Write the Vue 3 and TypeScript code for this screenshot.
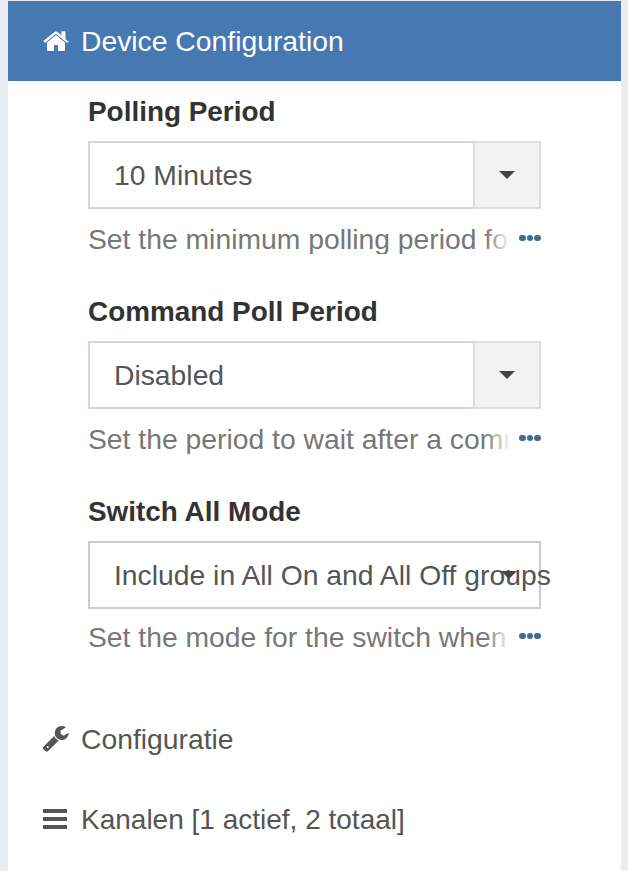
<script setup lang="ts">
interface Field {
  label: string
  value: string
  help: string
  addon: boolean
}

const fields: Field[] = [
  { label: 'Polling Period', value: '10 Minutes', help: 'Set the minimum polling period for this device', addon: true },
  { label: 'Command Poll Period', value: 'Disabled', help: 'Set the period to wait after a command', addon: true },
  { label: 'Switch All Mode', value: 'Include in All On and All Off groups', help: 'Set the mode for the switch when', addon: false },
]
</script>

<template>
  <div class="page">
    <div class="panel">
      <div class="head">
        <svg class="icon home" viewBox="0 0 1664 1792"><path fill="currentColor" d="M1408 992v480q0 26-19 45t-45 19H960v-384H704v384H320q-26 0-45-19t-19-45V992q0-1 .5-3t.5-3l575-474 575 474q1 2 1 6zm223-69l-62 74q-8 9-21 11h-3q-13 0-21-7L832 424 140 1001q-12 8-24 7-13-2-21-11l-62-74q-8-10-7-23.500t11-21.500L756 301q32-26 76-26t76 26l272 227V311q0-14 9-23t23-9h192q14 0 23 9t9 23v453l219 182q10 8 11 21.500t-7 23.500z"/></svg>
        <span>Device Configuration</span>
      </div>

      <div class="fields">
        <div v-for="f in fields" :key="f.label" class="field" :class="{ plain: !f.addon }">
          <div class="label">{{ f.label }}</div>
          <div class="select">
            <div class="addon"><i class="caret"></i></div>
            <div class="value">{{ f.value }}</div>
          </div>
          <div class="help">
            <div class="help-text">{{ f.help }}</div>
            <div class="dots"><i></i><i></i><i></i></div>
          </div>
        </div>
      </div>

      <div class="row first">
        <svg class="icon wrench" viewBox="0 0 1664 1792"><path fill="currentColor" d="M363 1408q0-26-19-45t-45-19-45 19-19 45 19 45 45 19 45-19 19-45zm644-420l-682 682q-37 37-90 37-52 0-91-37L38 1563q-38-36-38-90 0-53 38-91l681-681q39 98 114.500 173.500T1007 988zm634-435q0 39-23 106-47 134-164.500 217.500T1195 960q-185 0-316.500-131.500T747 512t131.500-316.500T1195 64q58 0 121.500 16.500T1424 127q16 11 16 28t-16 28l-293 169v224l193 107q5-3 79-48.500t135.500-81T1609 518q15 0 23.500 10t8.500 25z"/></svg>
        <span>Configuratie</span>
      </div>
      <div class="row">
        <svg class="icon bars" viewBox="0 0 24 20"><path fill="currentColor" d="M0 0h24v4H0zM0 8h24v4H0zM0 16h24v4H0z"/></svg>
        <span class="kanalen">Kanalen [1 actief, 2 totaal]</span>
      </div>
    </div>
  </div>
</template>

<style>
html, body {
  margin: 0;
  background: #e9edf3;
}
</style>

<style scoped>
.page {
  height: 871px;
  overflow: hidden;
  box-sizing: border-box;
  padding: 1px 7px 0 8px;
  background: #e9edf3;
  font-family: "Liberation Sans", Arial, sans-serif;
  color: #555;
}

.panel {
  height: 870px;
  background: #fff;
}

.head {
  display: flex;
  align-items: center;
  height: 80px;
  padding-left: 34px;
  background: #4679b2;
  color: #fff;
  font-size: 28.3px;
}

.icon {
  flex: none;
  display: block;
}

.home {
  width: 28px;
  height: 28px;
  margin-right: 11px;
}

.fields {
  padding: 15px 0 0 80px;
}

.field {
  width: 453px;
  margin-bottom: 42px;
}

.label {
  height: 30px;
  line-height: 32px;
  font-size: 27.9px;
  font-weight: bold;
  color: #333;
  margin-bottom: 15px;
}

.select {
  display: flex;
  position: relative;
  box-sizing: border-box;
  height: 68px;
  border: 2px solid #d3d6e2;
}

.plain .select {
  border-color: #ccc;
}

.value {
  position: relative;
  order: -1;
  flex: 1;
  min-width: 0;
  padding-left: 24px;
  line-height: 64px;
  font-size: 28.3px;
  white-space: nowrap;
}

.addon {
  flex: none;
  display: flex;
  align-items: center;
  justify-content: center;
  box-sizing: border-box;
  width: 68px;
  margin: -2px -2px -2px 0;
  background: #f3f3f3;
  border: 2px solid #ddd;
}

.plain .addon {
  position: absolute;
  right: 0;
  top: 0;
  bottom: 0;
  width: 60px;
  margin: 0;
  border: 0;
  background: none;
}

.caret {
  width: 0;
  height: 0;
  border-top: 8px solid #444;
  border-left: 8px solid transparent;
  border-right: 8px solid transparent;
}

.help {
  display: flex;
  align-items: center;
  margin-top: 15px;
  height: 30px;
}

.plain .help {
  margin-top: 13px;
}

.help-text {
  position: relative;
  flex: none;
  width: 423px;
  overflow: hidden;
  white-space: nowrap;
  font-size: 28.3px;
  line-height: 30px;
  color: #777;
}

.help-text::after {
  content: "";
  position: absolute;
  top: 0;
  right: 0;
  bottom: 0;
  width: 26px;
  background: linear-gradient(to right, rgba(255, 255, 255, 0), #fff);
}

.dots {
  display: flex;
  gap: 1px;
  margin: 0 0 2px 8px;
}

.dots i {
  width: 6.500px;
  height: 6.500px;
  border-radius: 50%;
  background: #3e6d94;
}

.row {
  display: flex;
  align-items: center;
  height: 80px;
  padding-left: 34px;
  font-size: 28.3px;
}

.row.first {
  margin-top: 47px;
}

.kanalen {
  padding-top: 2px;
  font-size: 28px;
}

.wrench {
  width: 28px;
  height: 28px;
  margin-right: 11px;
}

.bars {
  width: 24px;
  height: 20px;
  margin: 0 14px 0 1px;
}
</style>
